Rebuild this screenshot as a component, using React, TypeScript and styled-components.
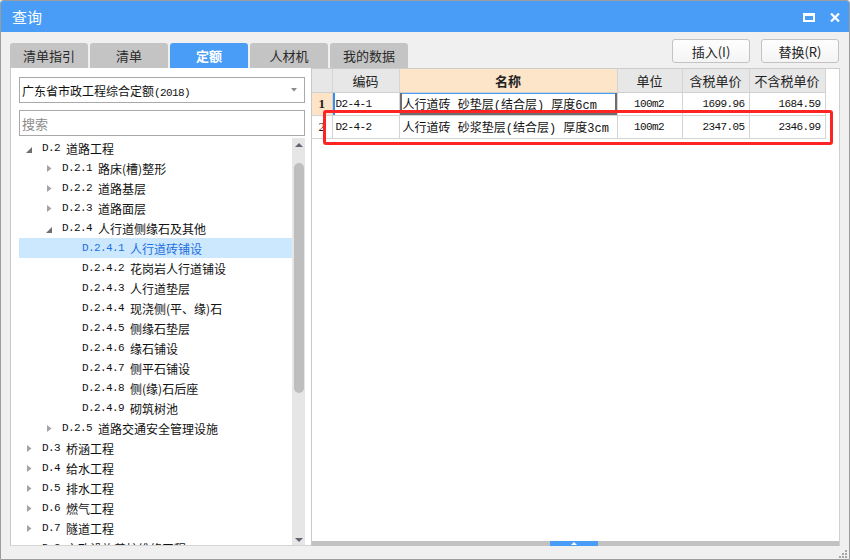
import React from "react";
import styled, { createGlobalStyle } from "styled-components";

const CJK = `"Noto Sans CJK SC", "Noto Sans", sans-serif`;
const MONO = `"Liberation Mono", "Noto Sans CJK SC", monospace`;
const BLUE = "#4a9df6";

const GlobalStyle = createGlobalStyle`
  html, body { margin: 0; padding: 0; background: #ffffff; }
  body { font-family: ${CJK}; }
  * { box-sizing: border-box; }
`;

const Window = styled.div`
  width: 850px;
  height: 560px;
  border: 1px solid #9c9c9c;
  border-radius: 3px 3px 0 0;
  background: #f0f0f0;
  display: flex;
  flex-direction: column;
  overflow: hidden;
`;

const TitleBar = styled.div`
  height: 31px;
  flex: none;
  background: ${BLUE};
  color: #ffffff;
  display: flex;
  align-items: center;
  justify-content: space-between;
  padding: 0 9px 0 11px;
  font-family: ${CJK};
  font-size: 15px;
`;

const TitleIcons = styled.div`
  display: flex;
  align-items: center;
  gap: 15px;
  padding-top: 1px;
`;

const Body = styled.div`
  flex: 1;
  display: flex;
  flex-direction: column;
  padding: 0 9px;
  min-height: 0;
`;

const TopRow = styled.div`
  height: 36px;
  flex: none;
  display: flex;
  align-items: flex-end;
  justify-content: space-between;
`;

const Tabs = styled.div`
  display: flex;
  gap: 2px;
`;

const Tab = styled.div<{ $active?: boolean }>`
  width: 78px;
  height: 25px;
  border-radius: 3px 3px 0 0;
  background: ${(p) => (p.$active ? BLUE : "#c4c4c4")};
  color: ${(p) => (p.$active ? "#ffffff" : "#2a2a2a")};
  font-weight: ${(p) => (p.$active ? 700 : 400)};
  font-family: ${CJK};
  font-size: 13px;
  display: flex;
  align-items: center;
  justify-content: center;
`;

const Buttons = styled.div`
  display: flex;
  gap: 11px;
  margin: 0 1px 5px 0;
`;

const Button = styled.div`
  width: 78px;
  height: 24px;
  border: 1px solid #c3c3c3;
  border-radius: 3px;
  background: linear-gradient(#fefefe, #f4f4f4);
  color: #222;
  font-family: ${CJK};
  font-size: 13px;
  display: flex;
  align-items: center;
  justify-content: center;
`;

const Content = styled.div`
  height: 478px;
  flex: none;
  display: flex;
`;

const LeftPanel = styled.div`
  width: 301px;
  flex: none;
  background: #ffffff;
  border-left: 1px solid #c8c8c8;
  border-bottom: 1px solid #d4d4d4;
  padding: 9px 6px 0 8px;
  display: flex;
  flex-direction: column;
`;

const Select = styled.div`
  height: 26px;
  flex: none;
  border: 1px solid #a9a9a9;
  display: flex;
  align-items: center;
  justify-content: space-between;
  padding: 0 7px 0 2px;
  font-family: ${CJK};
  font-size: 12px;
  color: #111;
`;

const Search = styled.div`
  height: 26px;
  flex: none;
  margin-top: 7px;
  border: 1px solid #a9a9a9;
  display: flex;
  align-items: center;
  padding: 0 2px;
  font-family: ${CJK};
  font-size: 13px;
  color: #8c8c8c;
`;

const TreeWrap = styled.div`
  flex: 1;
  margin-top: 2px;
  display: flex;
  min-height: 0;
`;

const TreeList = styled.div`
  flex: 1;
  overflow: hidden;
`;

const TreeRow = styled.div<{ $level: number; $selected?: boolean }>`
  height: 20px;
  display: flex;
  align-items: center;
  padding-left: ${(p) => p.$level * 20}px;
  background: ${(p) => (p.$selected ? "#cce8ff" : "transparent")};
  color: ${(p) => (p.$selected ? "#1f6fdc" : "#111111")};
  white-space: nowrap;
`;

const Toggle = styled.div`
  width: 23px;
  height: 20px;
  flex: none;
  display: flex;
  align-items: center;
  padding-left: 7px;
`;

const Code = styled.span`
  font-family: ${MONO};
  font-size: 11px;
  letter-spacing: -0.6px;
  white-space: pre;
`;

const Label = styled.span`
  font-family: ${CJK};
  font-size: 12px;
`;

const VScroll = styled.div`
  width: 13px;
  flex: none;
  background: #e6e6e6;
  display: flex;
  flex-direction: column;
  align-items: center;
`;

const VThumb = styled.div`
  width: 10px;
  height: 230px;
  margin-top: 16px;
  border-radius: 5px;
  background: #bebebe;
`;

const Grow = styled.div`
  flex: 1;
`;

const RightPanel = styled.div`
  flex: 1;
  position: relative;
  background: #ffffff;
  border-top: 1px solid #cccccc;
  border-left: 1px solid #c8c8c8;
  border-right: 1px solid #d0d0d0;
  display: flex;
  flex-direction: column;
`;

const Table = styled.table`
  border-collapse: collapse;
  table-layout: fixed;
  width: 513px;
`;

const Th = styled.th<{ $accent?: boolean }>`
  height: 23px;
  padding: 0;
  background: ${(p) => (p.$accent ? "#fde5c9" : "#e7e7e7")};
  border-right: 1px solid #d4d4d4;
  border-bottom: 1px solid #d0d0d0;
  font-family: ${CJK};
  font-size: 13px;
  font-weight: ${(p) => (p.$accent ? 700 : 400)};
  color: #222;
  text-align: center;
`;

const RowHead = styled.td<{ $active?: boolean }>`
  height: 23px;
  padding: 0;
  text-align: center;
  background: ${(p) => (p.$active ? "#fde4c6" : "#ffffff")};
  border-right: 1px solid #d4d4d4;
  border-bottom: 1px solid #d4d4d4;
  font-family: "Liberation Serif", serif;
  font-size: 13px;
  font-weight: ${(p) => (p.$active ? 700 : 400)};
  color: #222;
`;

const Td = styled.td<{ $align?: string; $frame?: "code" | "name" }>`
  height: 23px;
  padding: 0 4px 0 3px;
  text-align: ${(p) => p.$align || "left"};
  border-right: 1px solid #d4d4d4;
  border-bottom: 1px solid #d4d4d4;
  font-family: ${MONO};
  font-size: 12px;
  color: #111;
  white-space: nowrap;
  overflow: hidden;
  box-shadow: ${(p) =>
    p.$frame === "code"
      ? `inset 2px 0 0 #3b8cf0`
      : p.$frame === "name"
      ? `inset 2px 0 0 #6e6e6e, inset -2px 0 0 #6e6e6e, inset 0 -2px 0 #6e6e6e, inset 0 1px 0 #4a9df6`
      : "none"};
`;

const NumText = styled.span`
  font-family: ${MONO};
  font-size: 11px;
  letter-spacing: -0.6px;
`;

const HScroll = styled.div`
  height: 5px;
  flex: none;
  background: #c2c2c2;
  display: flex;
`;

const HThumb = styled.div`
  width: 48px;
  height: 5px;
  margin-left: 238px;
  background: ${BLUE};
  display: flex;
  align-items: center;
  justify-content: center;
`;

const Annotation = styled.div`
  position: absolute;
  left: 11px;
  top: 41px;
  width: 510px;
  height: 35px;
  border: 3px solid #fe2424;
  border-radius: 3px;
  pointer-events: none;
`;

const Footer = styled.div`
  flex: 1;
  display: flex;
  justify-content: flex-end;
  align-items: flex-end;
  margin-right: -7px;
  padding-bottom: 1px;
`;

type Node = {
  lvl: number;
  arrow?: "open" | "closed";
  code: string;
  text: string;
  selected?: boolean;
};

const tree: Node[] = [
  { lvl: 0, arrow: "open", code: "D.2", text: "道路工程" },
  { lvl: 1, arrow: "closed", code: "D.2.1", text: "路床(槽)整形" },
  { lvl: 1, arrow: "closed", code: "D.2.2", text: "道路基层" },
  { lvl: 1, arrow: "closed", code: "D.2.3", text: "道路面层" },
  { lvl: 1, arrow: "open", code: "D.2.4", text: "人行道侧缘石及其他" },
  { lvl: 2, code: "D.2.4.1", text: "人行道砖铺设", selected: true },
  { lvl: 2, code: "D.2.4.2", text: "花岗岩人行道铺设" },
  { lvl: 2, code: "D.2.4.3", text: "人行道垫层" },
  { lvl: 2, code: "D.2.4.4", text: "现浇侧(平、缘)石" },
  { lvl: 2, code: "D.2.4.5", text: "侧缘石垫层" },
  { lvl: 2, code: "D.2.4.6", text: "缘石铺设" },
  { lvl: 2, code: "D.2.4.7", text: "侧平石铺设" },
  { lvl: 2, code: "D.2.4.8", text: "侧(缘)石后座" },
  { lvl: 2, code: "D.2.4.9", text: "砌筑树池" },
  { lvl: 1, arrow: "closed", code: "D.2.5", text: "道路交通安全管理设施" },
  { lvl: 0, arrow: "closed", code: "D.3", text: "桥涵工程" },
  { lvl: 0, arrow: "closed", code: "D.4", text: "给水工程" },
  { lvl: 0, arrow: "closed", code: "D.5", text: "排水工程" },
  { lvl: 0, arrow: "closed", code: "D.6", text: "燃气工程" },
  { lvl: 0, arrow: "closed", code: "D.7", text: "隧道工程" },
  { lvl: 0, arrow: "closed", code: "D.8", text: "市政设施养护维修工程" },
];

const rows = [
  { no: "1", code: "D2-4-1", name: "人行道砖 砂垫层(结合层) 厚度6cm", unit: "100m2", tax: "1699.96", notax: "1684.59", active: true },
  { no: "2", code: "D2-4-2", name: "人行道砖 砂浆垫层(结合层) 厚度3cm", unit: "100m2", tax: "2347.05", notax: "2346.99", active: false },
];

const Arrow = ({ kind }: { kind: "open" | "closed" }) =>
  kind === "open" ? (
    <svg width="6" height="6" viewBox="0 0 6 6" style={{ marginTop: 3 }}>
      <path d="M6 0 L6 6 L0 6 Z" fill="#6f6f6f" />
    </svg>
  ) : (
    <svg width="5" height="7" viewBox="0 0 5 7" style={{ marginLeft: 1, marginTop: 1 }}>
      <path d="M0 0 L4.5 3.5 L0 7 Z" fill="#a3a3a3" />
    </svg>
  );

export default function App() {
  return (
    <>
      <GlobalStyle />
      <Window>
        <TitleBar>
          <span>查询</span>
          <TitleIcons>
            <svg width="12" height="9" viewBox="0 0 12 9">
              <rect x="1" y="1.5" width="10" height="6.5" fill="none" stroke="#fff" strokeWidth="2" />
              <rect x="0" y="0" width="12" height="3" fill="#fff" />
            </svg>
            <svg width="10" height="9" viewBox="0 0 10 9">
              <path d="M1 0.5 L9 8.5 M9 0.5 L1 8.5" stroke="#fff" strokeWidth="2.2" />
            </svg>
          </TitleIcons>
        </TitleBar>
        <Body>
          <TopRow>
            <Tabs>
              <Tab>清单指引</Tab>
              <Tab>清单</Tab>
              <Tab $active>定额</Tab>
              <Tab>人材机</Tab>
              <Tab>我的数据</Tab>
            </Tabs>
            <Buttons>
              <Button>插入(I)</Button>
              <Button>替换(R)</Button>
            </Buttons>
          </TopRow>
          <Content>
            <LeftPanel>
              <Select>
                <span>
                  广东省市政工程综合定额<Code>(2018)</Code>
                </span>
                <svg width="6" height="4" viewBox="0 0 6 4">
                  <path d="M0 0 L6 0 L3 3.5 Z" fill="#8a8a8a" />
                </svg>
              </Select>
              <Search>搜索</Search>
              <TreeWrap>
                <TreeList>
                  {tree.map((n) => (
                    <TreeRow key={n.code} $level={n.lvl} $selected={n.selected}>
                      <Toggle>{n.arrow && <Arrow kind={n.arrow} />}</Toggle>
                      <Code>{n.code + " "}</Code>
                      <Label>{n.text}</Label>
                    </TreeRow>
                  ))}
                </TreeList>
                <VScroll>
                  <svg width="8" height="4" viewBox="0 0 8 4" style={{ marginTop: 5 }}>
                    <path d="M0 4 L4 0 L8 4 Z" fill="#646472" />
                  </svg>
                  <VThumb />
                  <Grow />
                  <svg width="8" height="4" viewBox="0 0 8 4" style={{ marginBottom: 3 }}>
                    <path d="M0 0 L8 0 L4 4 Z" fill="#646472" />
                  </svg>
                </VScroll>
              </TreeWrap>
            </LeftPanel>
            <RightPanel>
              <Table>
                <colgroup>
                  <col style={{ width: 20 }} />
                  <col style={{ width: 67 }} />
                  <col style={{ width: 218 }} />
                  <col style={{ width: 65 }} />
                  <col style={{ width: 67 }} />
                  <col style={{ width: 76 }} />
                </colgroup>
                <thead>
                  <tr>
                    <Th />
                    <Th>编码</Th>
                    <Th $accent>名称</Th>
                    <Th>单位</Th>
                    <Th>含税单价</Th>
                    <Th>不含税单价</Th>
                  </tr>
                </thead>
                <tbody>
                  {rows.map((r) => (
                    <tr key={r.no}>
                      <RowHead $active={r.active}>{r.no}</RowHead>
                      <Td $frame={r.active ? "code" : undefined}>
                        <NumText>{r.code}</NumText>
                      </Td>
                      <Td $frame={r.active ? "name" : undefined}>{r.name}</Td>
                      <Td $align="center">
                        <NumText>{r.unit}</NumText>
                      </Td>
                      <Td $align="right">
                        <NumText>{r.tax}</NumText>
                      </Td>
                      <Td $align="right">
                        <NumText>{r.notax}</NumText>
                      </Td>
                    </tr>
                  ))}
                </tbody>
              </Table>
              <Grow />
              <HScroll>
                <HThumb>
                  <svg width="6" height="3" viewBox="0 0 6 3">
                    <path d="M0 3 L3 0 L6 3 Z" fill="#ffffff" />
                  </svg>
                </HThumb>
              </HScroll>
              <Annotation />
            </RightPanel>
          </Content>
          <Footer>
            <svg width="9" height="9" viewBox="0 0 9 9">
              <g fill="#a6a6a6">
                <rect x="7" y="1" width="2" height="2" />
                <rect x="4" y="4" width="2" height="2" />
                <rect x="7" y="4" width="2" height="2" />
                <rect x="1" y="7" width="2" height="2" />
                <rect x="4" y="7" width="2" height="2" />
                <rect x="7" y="7" width="2" height="2" />
              </g>
            </svg>
          </Footer>
        </Body>
      </Window>
    </>
  );
}
